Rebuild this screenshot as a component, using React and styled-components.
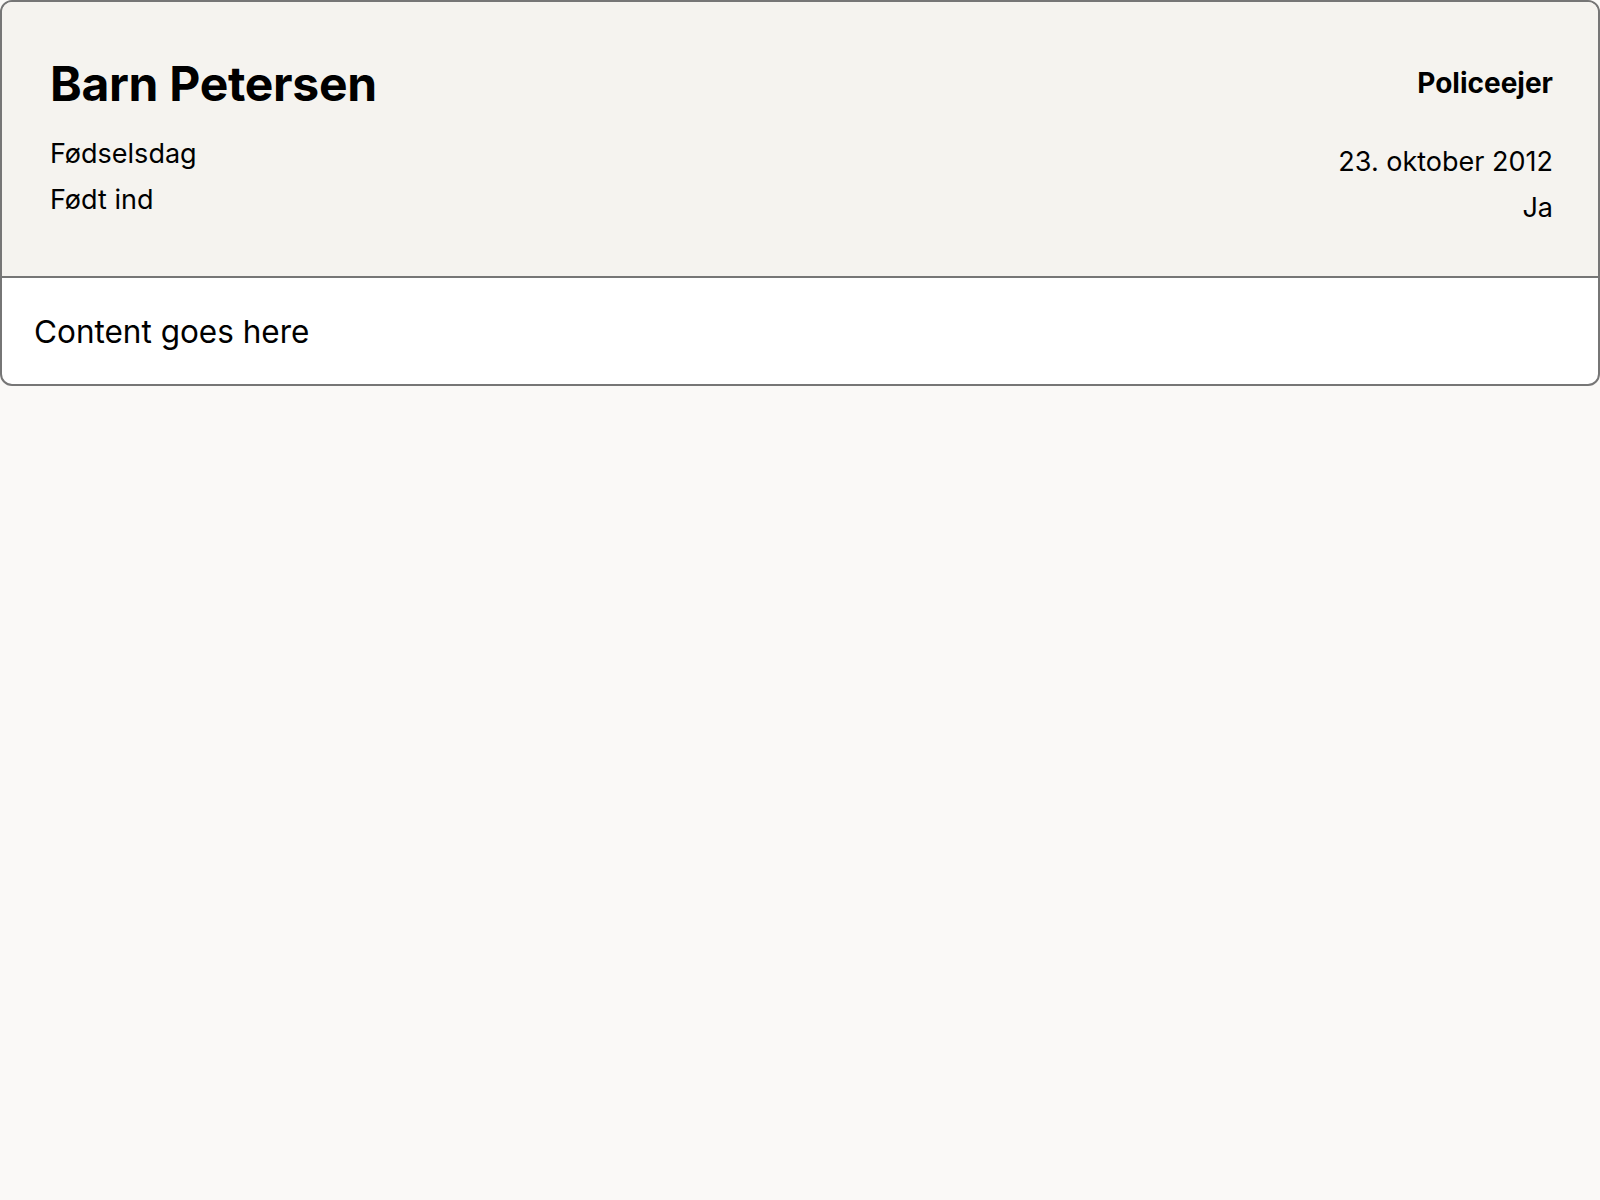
import styled, { createGlobalStyle } from "styled-components";

const GlobalStyle = createGlobalStyle`
    html, body {
        margin: 0;
        padding: 0;
        background-color: #faf9f7;
        font-family: "Inter", "Noto Sans", sans-serif;
        color: #000;
    }
`;

const Card = styled.div`
    width: 100%;
    box-sizing: border-box;
    border: 2px solid #767676;
    border-radius: 12px;
    overflow: hidden;
    background-color: #ffffff;
`;

const Header = styled.div`
    display: flex;
    justify-content: space-between;
    align-items: flex-start;
    height: 276px;
    box-sizing: border-box;
    padding: 48px 45px 0 48px;
    background-color: #f5f3ef;
    border-bottom: 2px solid #767676;
`;

const Column = styled.div`
    display: flex;
    flex-direction: column;
    align-items: ${(props) => (props.$right ? "flex-end" : "flex-start")};
`;

const Title = styled.h1`
    margin: 0;
    font-size: 48px;
    font-weight: 700;
    line-height: 68px;
    letter-spacing: -0.3px;
`;

const Role = styled.div`
    margin: 11px 0 0 0;
    font-size: 28px;
    font-weight: 700;
    line-height: 44px;
`;

const InfoList = styled.div`
    display: flex;
    flex-direction: column;
    margin-top: ${(props) => props.$offset}px;
`;

const InfoLine = styled.div`
    font-size: 27px;
    font-weight: 400;
    line-height: 46px;
    text-align: ${(props) => (props.$right ? "right" : "left")};
`;

const Body = styled.div`
    height: 106px;
    box-sizing: border-box;
    display: flex;
    align-items: center;
    padding: 0 32px;
    font-size: 31.5px;
`;

const App = () => {
    return (
        <>
            <GlobalStyle />
            <Card>
                <Header>
                    <Column>
                        <Title>Barn Petersen</Title>
                        <InfoList $offset={13}>
                            <InfoLine>Fødselsdag</InfoLine>
                            <InfoLine>Født ind</InfoLine>
                        </InfoList>
                    </Column>
                    <Column $right>
                        <Role>Policeejer</Role>
                        <InfoList $offset={34}>
                            <InfoLine $right>23. oktober 2012</InfoLine>
                            <InfoLine $right>Ja</InfoLine>
                        </InfoList>
                    </Column>
                </Header>
                <Body>Content goes here</Body>
            </Card>
        </>
    );
};

export default App;
